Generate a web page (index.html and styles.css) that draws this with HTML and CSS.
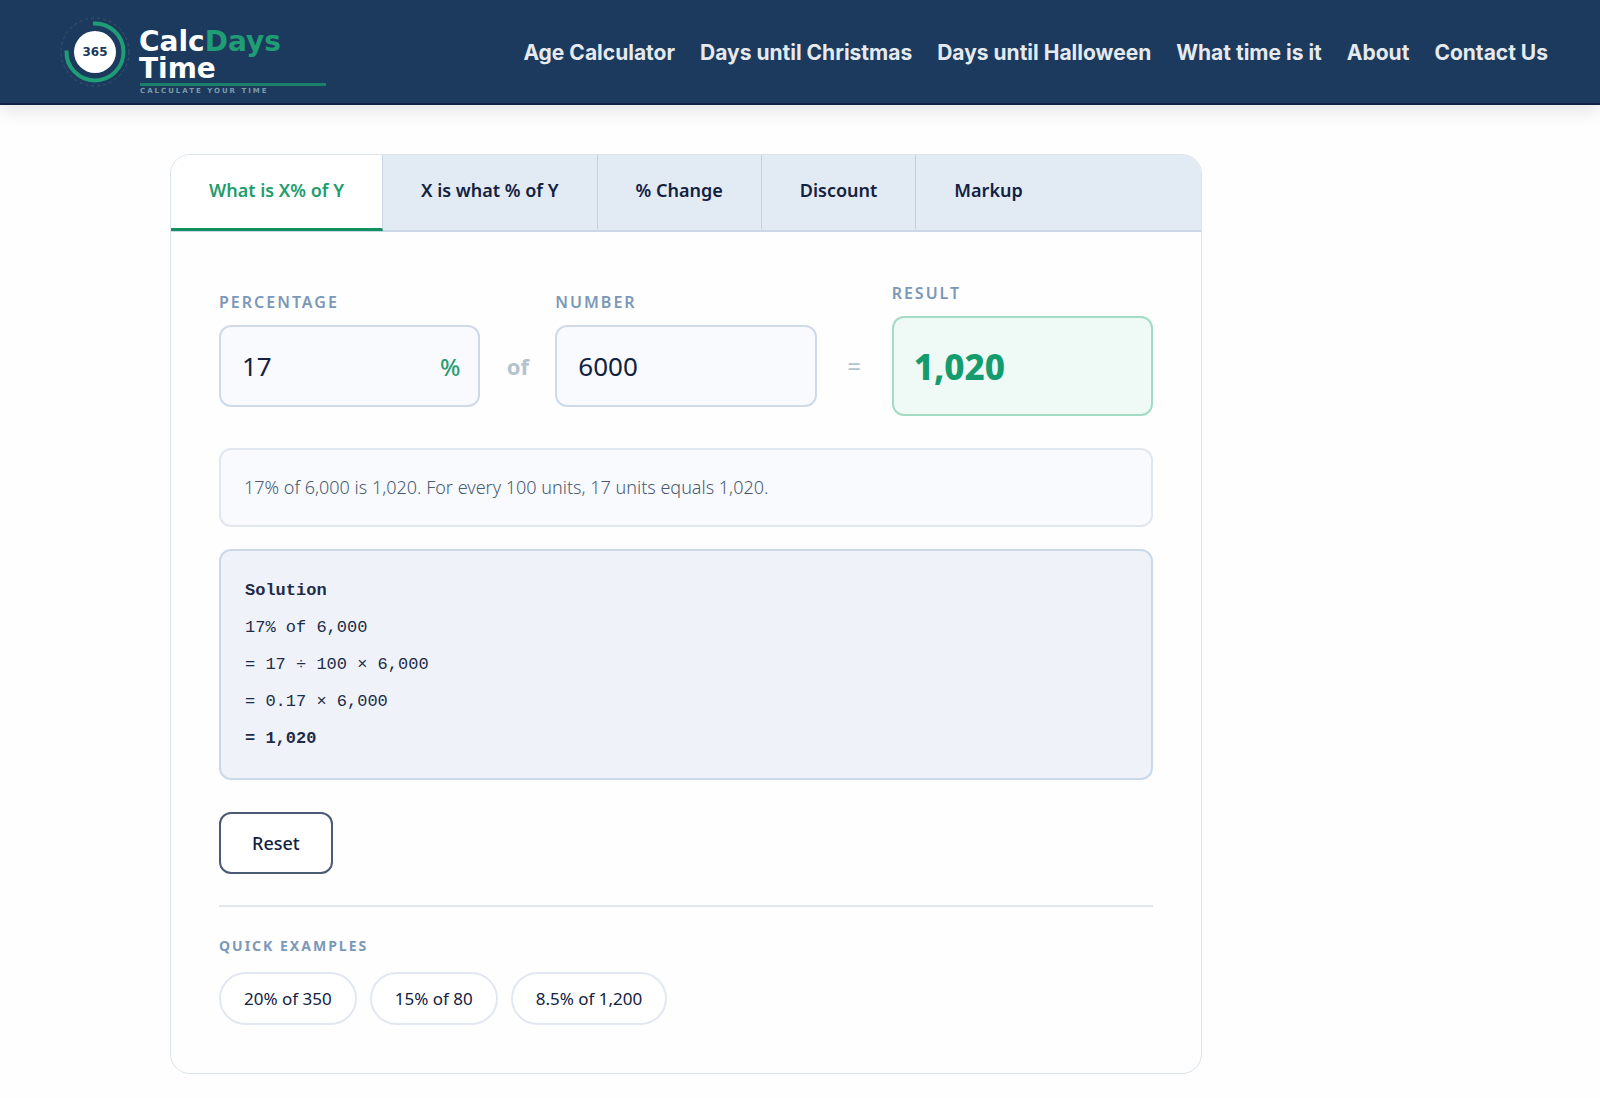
FILE: index.html
```html
<!DOCTYPE html>
<html lang="en">
<head>
<meta charset="utf-8">
<meta name="viewport" content="width=device-width, initial-scale=1">
<title>Percentage Calculator - CalcDaysTime</title>
<link rel="stylesheet" href="styles.css">
</head>
<body>
<header class="site-header">
  <a class="logo" href="#" aria-label="CalcDaysTime home">
    <svg width="272" height="84" viewBox="0 0 272 84">
      <circle class="logo-orbit" cx="35" cy="42" r="34"/>
      <path class="logo-ring" d="M33 13.500A28.500 28.500 0 1 1 6.500 40.500"/>
      <circle class="logo-disc" cx="35" cy="42" r="21"/>
      <text class="logo-num" x="35" y="46" text-anchor="middle">365</text>
      <text class="logo-name" x="79" y="41">Calc<tspan class="logo-accent">Days</tspan></text>
      <text class="logo-name" x="79" y="68">Time</text>
      <rect class="logo-line" x="80" y="73" width="186" height="3"/>
      <text class="logo-tag" x="80" y="83">CALCULATE YOUR TIME</text>
    </svg>
  </a>
  <nav class="site-nav" aria-label="Main">
    <a href="#">Age Calculator</a>
    <a href="#">Days until Christmas</a>
    <a href="#">Days until Halloween</a>
    <a href="#">What time is it</a>
    <a href="#">About</a>
    <a href="#">Contact Us</a>
  </nav>
</header>

<main class="content">
  <section class="card">
    <div class="tabs" role="tablist">
      <button class="tab tab-active" role="tab" aria-selected="true" type="button">What is X% of Y</button>
      <button class="tab" role="tab" aria-selected="false" type="button">X is what % of Y</button>
      <button class="tab" role="tab" aria-selected="false" type="button">% Change</button>
      <button class="tab" role="tab" aria-selected="false" type="button">Discount</button>
      <button class="tab" role="tab" aria-selected="false" type="button">Markup</button>
    </div>
    <form class="panel">
      <div class="calc">
        <div class="field">
          <label class="field-label" for="percentage">Percentage</label>
          <div class="input-box">
            <input id="percentage" type="text" inputmode="decimal" value="17">
            <span class="unit">%</span>
          </div>
        </div>
        <span class="operator operator-word">of</span>
        <div class="field">
          <label class="field-label" for="number">Number</label>
          <div class="input-box">
            <input id="number" type="text" inputmode="decimal" value="6000">
          </div>
        </div>
        <span class="operator">=</span>
        <div class="field">
          <label class="field-label" for="result">Result</label>
          <output class="result" id="result" for="percentage number">1,020</output>
        </div>
      </div>
      <p class="summary">17% of 6,000 is 1,020. For every 100 units, 17 units equals 1,020.</p>
      <div class="solution">
        <div class="strong">Solution</div>
        <div>17% of 6,000</div>
        <div>= 17 ÷ 100 × 6,000</div>
        <div>= 0.17 × 6,000</div>
        <div class="strong">= 1,020</div>
      </div>
      <button class="reset" type="button">Reset</button>
      <div class="examples">
        <h2 class="examples-title">Quick examples</h2>
        <div class="pills">
          <button class="pill" type="button">20% of 350</button>
          <button class="pill" type="button">15% of 80</button>
          <button class="pill" type="button">8.5% of 1,200</button>
        </div>
      </div>
    </form>
  </section>
</main>
</body>
</html>
```
FILE: styles.css
```css
* { box-sizing: border-box; }

body {
  margin: 0;
  background: #fefefe;
  color: #12213f;
  font-family: "Noto Sans", "Open Sans", sans-serif;
}

button, input {
  font-family: inherit;
  color: inherit;
}

/* Header */
.site-header {
  display: flex;
  align-items: center;
  justify-content: space-between;
  padding: 10px 52px 9px 60px;
  background: #1c3a5e;
  border-bottom: 2px solid #0f2348;
  box-shadow: 0 4px 20px rgba(0, 0, 0, 0.12);
}

.logo { display: block; }
.logo svg { display: block; overflow: visible; }
.logo-orbit { fill: none; stroke: #3b5673; stroke-width: 1; stroke-dasharray: 3 3; }
.logo-ring { fill: none; stroke: #1f9d74; stroke-width: 4; }
.logo-disc { fill: #fff; }
.logo-num { font: bold 12px "DejaVu Sans", sans-serif; fill: #1c3a5e; }
.logo-name { font: bold 28px "DejaVu Sans", sans-serif; fill: #fff; }
.logo-name .logo-accent { fill: #1f9d74; }
.logo-line { fill: #1b8068; }
.logo-tag { font: bold 7px "DejaVu Sans", sans-serif; letter-spacing: 2px; fill: #7d9aa6; }

.site-nav {
  display: flex;
  gap: 25px;
  padding-top: 2px;
  font: 700 21px/32px Inter, sans-serif;
}
.site-nav a { color: #e6eaef; text-decoration: none; white-space: nowrap; }

/* Calculator card */
.content { padding: 49px 170px 24px; }

.card {
  max-width: 1032px;
  border: 1px solid #dbe3ec;
  border-radius: 20px;
  overflow: hidden;
}

.tabs {
  display: flex;
  background: #e2eaf3;
  border-bottom: 2px solid #cbd7e5;
}
.tab {
  height: 76px;
  margin-bottom: -1px;
  padding: 0 38px 4px;
  border: 0;
  border-right: 1px solid #c3d0dd;
  border-bottom: 3px solid transparent;
  background: transparent;
  background-clip: padding-box;
  font-size: 18px;
  font-weight: 600;
  white-space: nowrap;
}
.tab:last-child { border-right: 0; }
.tab-active {
  background: #fff;
  border-right-color: #cbd7e2;
  border-bottom-color: #12905f;
  color: #1f9d6c;
}

.panel { padding: 48px; }

.calc {
  display: grid;
  grid-template-columns: 1fr 75px 1fr 75px 1fr;
  align-items: center;
}
.field { display: flex; flex-direction: column; gap: 10px; min-width: 0; }
.field-label, .examples-title {
  margin: 0;
  color: #7c98b8;
  font-size: 16px;
  font-weight: 600;
  line-height: 26px;
  letter-spacing: 2px;
  text-transform: uppercase;
}
.input-box {
  display: flex;
  align-items: center;
  height: 82px;
  padding: 0 18px 0 21px;
  border: 2px solid #cfdae8;
  border-radius: 12px;
  background: #f8fafd;
}
.input-box input {
  flex: 1;
  width: 100%;
  min-width: 0;
  padding: 0;
  border: 0;
  outline: 0;
  background: none;
  font-size: 26px;
}
.unit { color: #2a9d73; font-size: 24px; font-weight: 500; }
.operator {
  padding-top: 36px;
  color: #b3c3cc;
  font-size: 24px;
  line-height: 40px;
  text-align: center;
}
.operator-word { font-weight: 700; font-size: 22px; }
.result {
  display: flex;
  align-items: center;
  height: 100px;
  padding: 0 20px;
  border: 2px solid #a3dcc4;
  border-radius: 12px;
  background: #eff9f5;
  color: #149c6e;
  font-size: 35px;
  font-weight: 800;
}

.summary {
  margin: 32px 0 22px;
  padding: 22px 23px;
  border: 2px solid #e1e7ef;
  border-radius: 12px;
  background: #f8fafd;
  color: #4a5a72;
  font-size: 18px;
  font-weight: 300;
  line-height: 31px;
}
.solution {
  padding: 21px 24px;
  border: 2px solid #c9d9ea;
  border-radius: 12px;
  background: #eff3f9;
  color: #1d2c48;
  font-family: "Liberation Mono", monospace;
  font-size: 17px;
  line-height: 37px;
}
.strong { font-weight: 700; }

.reset {
  margin-top: 32px;
  height: 62px;
  padding: 0 31px;
  border: 2px solid #4b5a75;
  border-radius: 12px;
  background: #fff;
  font-size: 18px;
  font-weight: 500;
}

.examples {
  margin-top: 31px;
  padding-top: 26px;
  border-top: 2px solid #e1e6ed;
}
.examples-title { font-size: 14px; font-weight: 700; }
.pills { display: flex; flex-wrap: wrap; gap: 13px; margin-top: 13px; }
.pill {
  height: 53px;
  padding: 0 23px;
  border: 2px solid #e2e7f1;
  border-radius: 27px;
  background: #fff;
  font-size: 17px;
}
```
